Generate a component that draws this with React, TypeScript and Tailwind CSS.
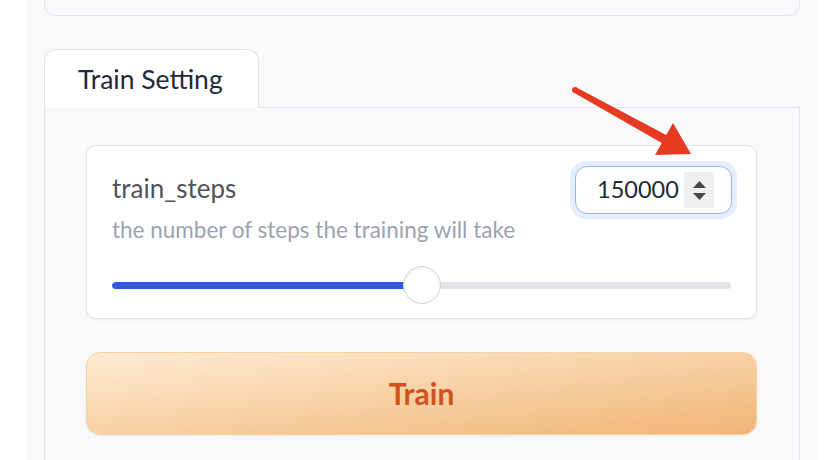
import React from "react";

const font = { fontFamily: "Lato, 'Noto Sans', sans-serif" };

function NumberBox({ value }: { value: number }) {
    return (
        <div className="rounded-[16px] p-[5px] bg-[#e6eefd] -m-[6px]">
            <div className="flex items-center w-[157px] h-[48px] rounded-[12px] border border-[#93b4f5] bg-white pl-[21px] pr-[17px]">
                <span className="flex-1 text-[23.5px] text-[#1f2937] leading-none">{value}</span>
                {/* spinner */}
                <div className="flex flex-col items-center justify-center gap-[5px] w-[30px] h-[36px] bg-[#efefef]">
                    <svg width="13" height="7" viewBox="0 0 13 7"><path d="M6.5 0 L13 7 L0 7 Z" fill="#474747" /></svg>
                    <svg width="13" height="7" viewBox="0 0 13 7"><path d="M0 0 L13 0 L6.5 7 Z" fill="#474747" /></svg>
                </div>
            </div>
        </div>
    );
}

function Slider({ percent }: { percent: number }) {
    return (
        <div className="relative h-[38px] flex items-center">
            <div className="w-full h-[7px] rounded-full bg-[#e2e3e8] overflow-hidden">
                <div className="h-full bg-[#3257e0] rounded-full" style={{ width: `${percent}%` }} />
            </div>
            <div
                className="absolute top-0 w-[38px] h-[38px] -ml-[19px] rounded-full bg-white border border-[#d4d4d8] shadow-[inset_0_1px_4px_rgba(0,0,0,0.08)]"
                style={{ left: `${percent}%` }}
            />
        </div>
    );
}

export default function App() {
    return (
        <div className="relative w-[834px] h-[460px] overflow-hidden bg-white" style={font}>
            <div className="ml-[27px] w-[790px] h-full bg-[#f8f9fb] px-[17px]">
                {/* previous block */}
                <div className="h-[16px] rounded-b-[12px] border border-t-0 border-[#e3e4e8]" />

                {/* tabs */}
                <div className="flex mt-[33px]">
                    <div className="w-[215px] h-[59px] rounded-t-[12px] border border-b-0 border-[#e3e4e8] bg-white pl-[33px] flex items-center">
                        <span className="text-[26.5px] text-[#1f2937] leading-none">Train Setting</span>
                    </div>
                    <div className="flex-1 border-b border-[#e3e4e8]" />
                </div>

                {/* panel */}
                <div className="h-[400px] border-x border-[#e3e4e8] pl-[41px] pr-[42px] pt-[37px]">
                    <div className="rounded-[10px] border border-[#e3e4e8] bg-white shadow-[0_1px_3px_rgba(0,0,0,0.05)] px-[25px] pt-[21px] pb-[14px]">
                        <div className="flex justify-between items-start">
                            <div className="pt-[7px]">
                                <div className="text-[26px] leading-[28px] text-[#52525b]">train_steps</div>
                                <div className="mt-[15px] text-[22.5px] leading-[26px] text-[#9ca3af]">the number of steps the training will take</div>
                            </div>
                            <NumberBox value={150000} />
                        </div>
                        <div className="mt-[23px]">
                            <Slider percent={50} />
                        </div>
                    </div>

                    <button className="mt-[33px] w-full h-[83px] rounded-[14px] border border-[#f7d3a4] bg-gradient-to-br from-[#fdecd3] to-[#f0b575] shadow-[0_1px_3px_rgba(0,0,0,0.06)] text-[30px] font-bold text-[#d1521d]">
                        Train
                    </button>
                </div>
            </div>

            {/* annotation arrow */}
            <svg className="absolute left-0 top-0 pointer-events-none" width="834" height="460">
                <circle cx="575" cy="90" r="3" fill="#e63b20" />
                <polygon
                    points="576.4,87.4 666.2,135.1 673,123 691,154 655,155 661.8,142.9 573.6,92.6"
                    fill="#e63b20"
                />
            </svg>
        </div>
    );
}
